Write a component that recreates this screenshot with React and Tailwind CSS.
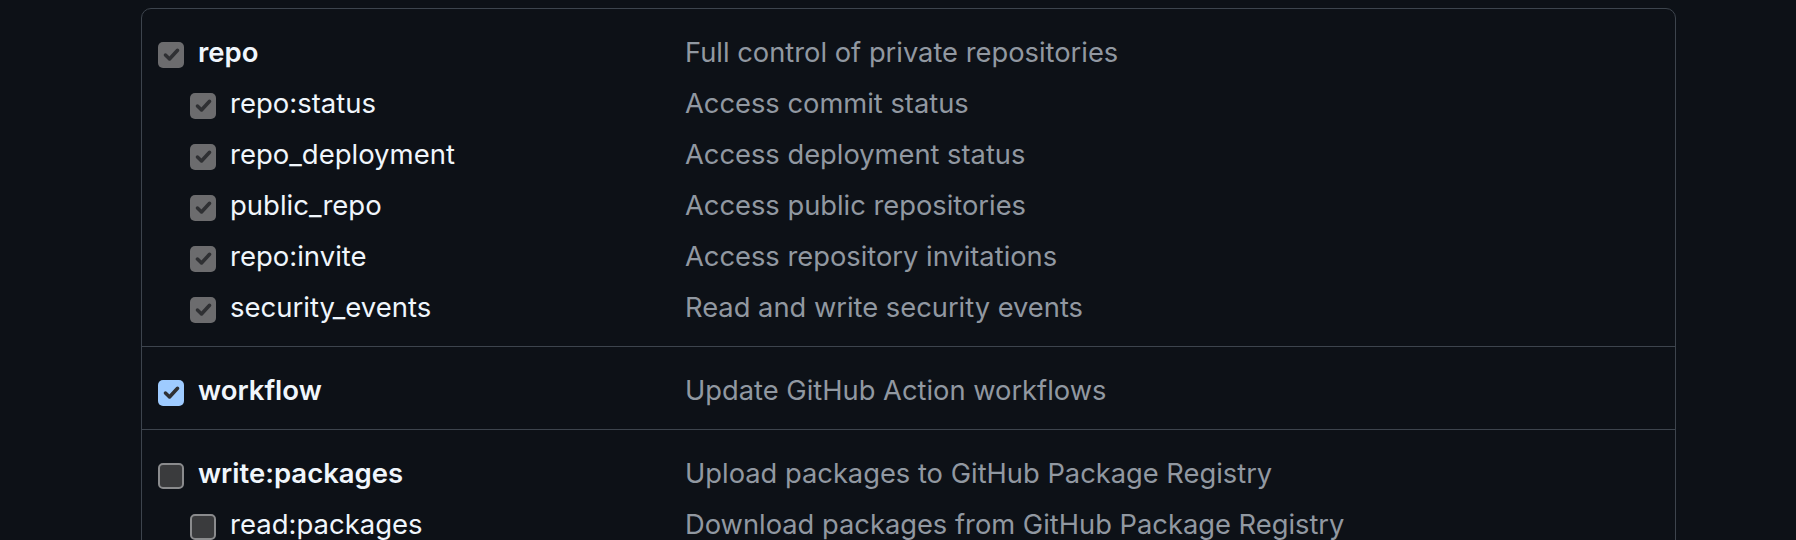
import React from 'react';

const sections = [
  [
    { name: 'repo', desc: 'Full control of private repositories', state: 'locked', top: true },
    { name: 'repo:status', desc: 'Access commit status', state: 'locked' },
    { name: 'repo_deployment', desc: 'Access deployment status', state: 'locked' },
    { name: 'public_repo', desc: 'Access public repositories', state: 'locked' },
    { name: 'repo:invite', desc: 'Access repository invitations', state: 'locked' },
    { name: 'security_events', desc: 'Read and write security events', state: 'locked' },
  ],
  [{ name: 'workflow', desc: 'Update GitHub Action workflows', state: 'checked', top: true }],
  [
    { name: 'write:packages', desc: 'Upload packages to GitHub Package Registry', state: 'off', top: true },
    { name: 'read:packages', desc: 'Download packages from GitHub Package Registry', state: 'off' },
  ],
];

function Check() {
  return (
    <svg viewBox="0 0 16 16" className="w-[21px] h-[21px]" fill="none">
      <path d="M3.4 8.4 L6.5 11.4 L12.6 4.8" stroke="#2f3033" strokeWidth="2.7" strokeLinecap="round" strokeLinejoin="round" />
    </svg>
  );
}

function Box({ state }) {
  if (state === 'off') {
    return <span className="w-[26px] h-[26px] shrink-0 rounded-[5px] border-2 border-[#8a8b8d] bg-[#3a3b3d]" />;
  }
  return (
    <span
      className={`w-[26px] h-[26px] shrink-0 rounded-[5px] flex items-center justify-center ${
        state === 'checked' ? 'bg-[#9ecbff]' : 'bg-[#6c6c6e]'
      }`}
    >
      <Check />
    </span>
  );
}

function Row({ item }) {
  return (
    <div className="flex items-center h-[51px]">
      <div className={`flex items-center w-[527px] ${item.top ? '' : 'pl-[32px]'}`}>
        <Box state={item.state} />
        <span className={`ml-[14px] -mt-[3px] text-[#f0f6fc] ${item.top ? 'font-semibold' : ''}`}>{item.name}</span>
      </div>
      <span className="-mt-[3px] text-[27.3px] text-[#9198a1]">{item.desc}</span>
    </div>
  );
}

export default function App() {
  return (
    <div className="w-[1796px] h-[540px] bg-[#0d1117] overflow-hidden pt-[8px] font-['Inter','Liberation_Sans',sans-serif] text-[27.5px]">
      <div className="ml-[141px] w-[1535px] h-[600px] border border-[#3d444d] rounded-[10px]">
        {sections.map((rows, i) => (
          <div
            key={i}
            className={`pl-[16px] pt-[20px] pb-[11px] ${i > 0 ? 'border-t border-[#3d444d]' : ''}`}
          >
            {rows.map((r) => (
              <Row key={r.name} item={r} />
            ))}
          </div>
        ))}
      </div>
    </div>
  );
}
